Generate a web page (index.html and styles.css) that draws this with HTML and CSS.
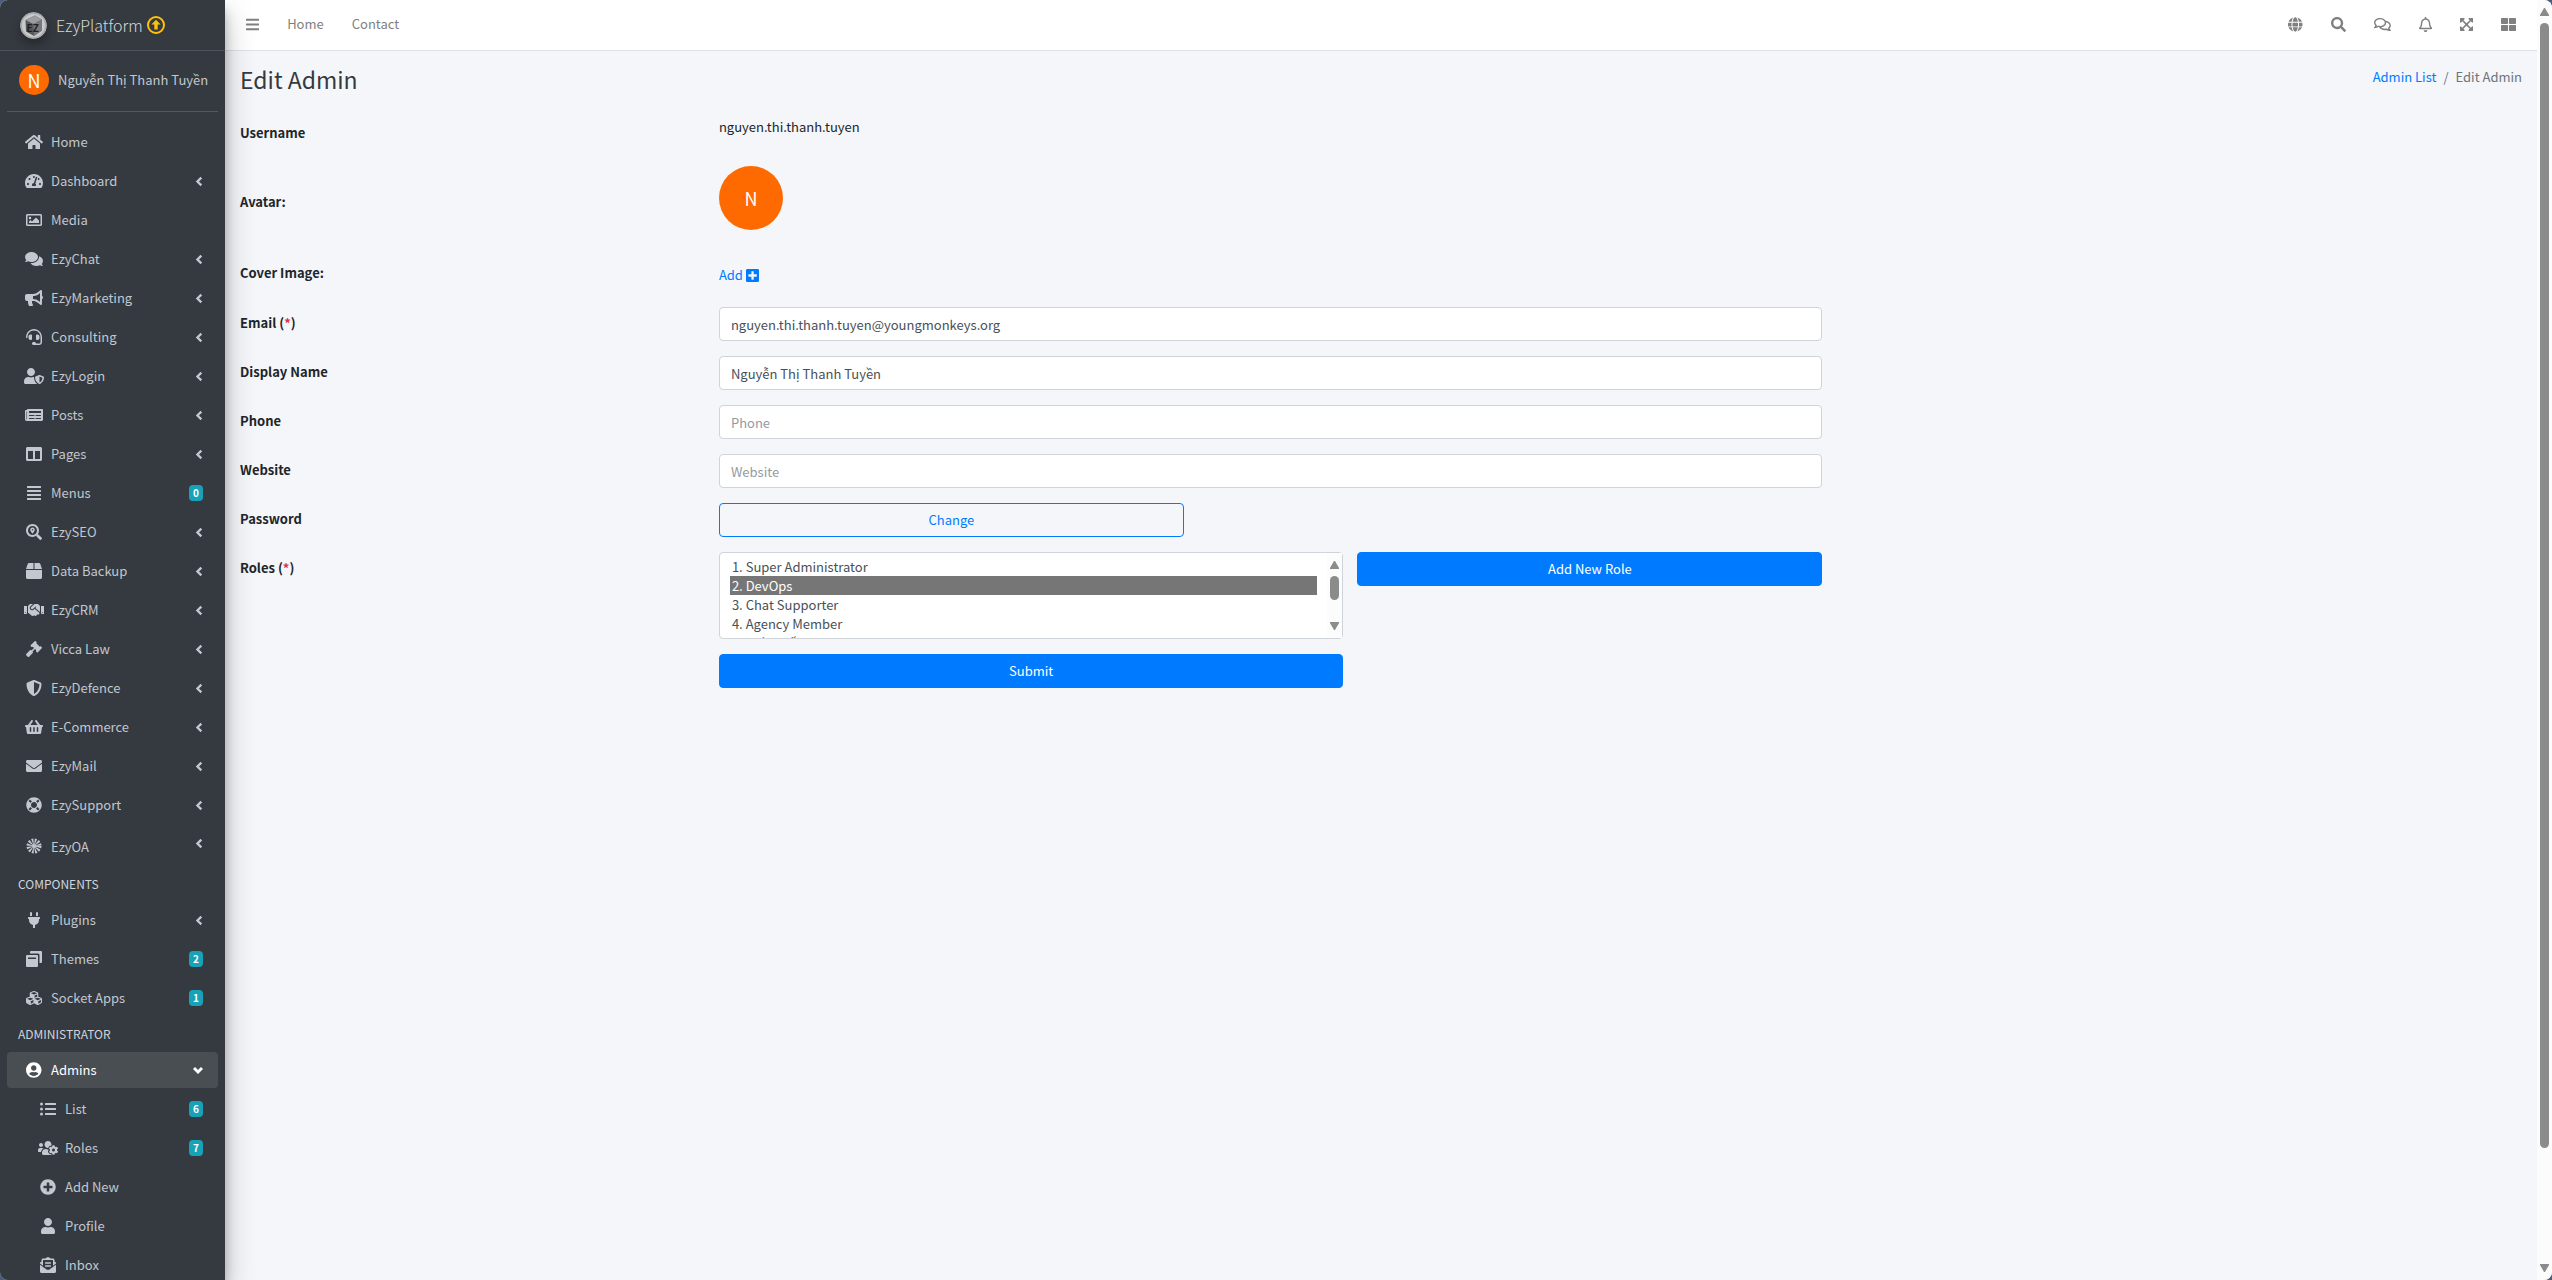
FILE: index.html
```html
<!DOCTYPE html>
<html lang="en">
<head>
    <meta charset="UTF-8">
    <meta name="viewport" content="width=device-width, initial-scale=1.0">
    <title>Edit Admin</title>
    <link rel="stylesheet" href="styles.css">
</head>
<body>

<div class="wrapper">
    <aside class="sidebar">
        <a href="#" class="brand">
            <svg class="brand-logo" viewBox="0 0 54 54">
                <circle cx="27" cy="27" r="27" fill="#a9aaab"/>
                <circle cx="27" cy="27" r="23" fill="#c9cacb"/>
                <path d="M11 16l19-9 14 8v22L28 48 12 39z" fill="#56585a"/>
                <path d="M11 16l19-9 14 8-17 9z" fill="#9b9d9e"/>
                <path d="M27 24l17-9v22L28 48z" fill="#77797b"/>
                <text x="13" y="39" class="logo-text">EZ</text>
            </svg>
            <span class="brand-text">EzyPlatform</span>
            <svg class="brand-update" viewBox="0 0 18 18">
                <circle cx="9" cy="9" r="8" fill="none" stroke="#ffc107" stroke-width="2"/>
                <path d="M9 3.8l4.6 4.8H10.700V13.600H7.300V8.600H4.400z" fill="#ffc107"/>
            </svg>
        </a>

        <div class="user-panel">
            <span class="user-avatar">N</span>
            <a href="#">Nguyễn Thị Thanh Tuyền</a>
        </div>

        <nav class="nav-sidebar">
            <a href="#" class="nav-item">
                <span class="nav-icon"><svg viewBox="0 0 576 512"><path d="M280.37 148.26L96 300.11V464a16 16 0 0 0 16 16l112.06-.29a16 16 0 0 0 15.92-16V368a16 16 0 0 1 16-16h64a16 16 0 0 1 16 16v95.64a16 16 0 0 0 16 16.05L464 480a16 16 0 0 0 16-16V300L295.67 148.26a12.19 12.19 0 0 0-15.3 0zM571.6 251.47L488 182.56V44.05a12 12 0 0 0-12-12h-56a12 12 0 0 0-12 12v72.61L318.47 43a48 48 0 0 0-61 0L4.34 251.47a12 12 0 0 0-1.6 16.9l25.5 31A12 12 0 0 0 45.15 301l235.22-193.74a12.19 12.19 0 0 1 15.3 0L530.9 301a12 12 0 0 0 16.9-1.6l25.5-31a12 12 0 0 0-1.7-16.93z"/></svg></span>
                <span>Home</span>
            </a>
            <a href="#" class="nav-item">
                <span class="nav-icon"><svg viewBox="0 0 576 512"><path d="M288 32C128.940 32 0 160.940 0 320c0 52.800 14.250 102.260 39.060 144.800 5.610 9.620 16.300 15.200 27.440 15.200h443c11.140 0 21.830-5.580 27.440-15.200C561.750 422.260 576 372.800 576 320c0-159.060-128.940-288-288-288zm0 64c14.710 0 26.580 10.130 30.320 23.650-1.110 2.260-2.640 4.230-3.450 6.670l-9.220 27.670c-5.130 3.490-10.970 6.010-17.640 6.010-17.670 0-32-14.330-32-32S270.330 96 288 96zM96 384c-17.670 0-32-14.330-32-32s14.330-32 32-32 32 14.330 32 32-14.330 32-32 32zm48-160c-17.670 0-32-14.330-32-32s14.330-32 32-32 32 14.330 32 32-14.330 32-32 32zm246.770-72.410l-61.330 184C343.130 347.330 352 364.540 352 384c0 11.720-3.380 22.550-8.880 32H232.880c-5.500-9.450-8.880-20.280-8.880-32 0-33.940 26.500-61.430 59.900-63.590l61.340-184.010c4.170-12.560 17.730-19.450 30.360-15.170 12.570 4.190 19.350 17.790 15.170 30.360zm14.660 57.200l15.520-46.550c3.470-1.290 7.130-2.230 11.050-2.230 17.670 0 32 14.330 32 32s-14.330 32-32 32c-11.380-.01-20.890-6.280-26.570-15.220zM480 384c-17.670 0-32-14.330-32-32s14.330-32 32-32 32 14.330 32 32-14.330 32-32 32z"/></svg></span>
                <span>Dashboard</span>
                <svg class="arrow" viewBox="0 0 10 14"><path d="M8 2L3 7l5 5"/></svg>
            </a>
            <a href="#" class="nav-item">
                <span class="nav-icon"><svg viewBox="0 0 512 512"><path d="M464 64H48C21.490 64 0 85.490 0 112v288c0 26.510 21.490 48 48 48h416c26.510 0 48-21.490 48-48V112c0-26.510-21.490-48-48-48zm-6 336H54a6 6 0 0 1-6-6V118a6 6 0 0 1 6-6h404a6 6 0 0 1 6 6v276a6 6 0 0 1-6 6zM128 152c-22.091 0-40 17.909-40 40s17.909 40 40 40 40-17.909 40-40-17.909-40-40-40zM96 352h320v-80l-87.515-87.515c-4.686-4.686-12.284-4.686-16.971 0L192 304l-39.515-39.515c-4.686-4.686-12.284-4.686-16.971 0L96 304v48z"/></svg></span>
                <span>Media</span>
            </a>
            <a href="#" class="nav-item">
                <span class="nav-icon"><svg viewBox="0 0 576 512"><path d="M416 192c0-88.400-93.100-160-208-160S0 103.600 0 192c0 34.300 14.100 65.900 38 92-13.400 30.200-35.500 54.200-35.800 54.500-2.200 2.300-2.800 5.700-1.500 8.700S4.800 352 8 352c36.600 0 66.900-12.300 88.700-25 32.200 15.700 70.300 25 111.300 25 114.900 0 208-71.600 208-160zm122 220c23.900-26 38-57.700 38-92 0-66.900-53.500-124.200-129.300-148.100.9 6.600 1.300 13.300 1.300 20.100 0 105.900-107.700 192-240 192-10.800 0-21.300-.8-31.700-1.900C207.800 439.600 281.800 480 368 480c41 0 79.100-9.200 111.300-25 21.800 12.700 52.100 25 88.700 25 3.200 0 6.100-1.900 7.300-4.800 1.300-2.900.7-6.300-1.500-8.700-.3-.3-22.400-24.200-35.800-54.500z"/></svg></span>
                <span>EzyChat</span>
                <svg class="arrow" viewBox="0 0 10 14"><path d="M8 2L3 7l5 5"/></svg>
            </a>
            <a href="#" class="nav-item">
                <span class="nav-icon"><svg viewBox="0 0 576 512"><path d="M576 240c0-23.630-12.950-44.040-32-55.120V32.010C544 23.260 537.020 0 512 0c-7.120 0-14.190 2.380-19.980 7.020l-85.030 68.030C364.280 109.190 310.660 128 256 128H64c-35.350 0-64 28.650-64 64v96c0 35.350 28.650 64 64 64h33.700c-1.390 10.480-2.180 21.140-2.180 32 0 39.770 9.260 77.350 25.560 110.940 5.190 10.690 16.520 17.060 28.400 17.060h74.280c26.050 0 41.690-29.840 25.900-50.560-16.400-21.520-26.150-48.360-26.150-77.440 0-11.110 1.620-21.790 4.410-32H256c54.660 0 108.280 18.810 150.980 52.950l85.030 68.030a32.023 32.023 0 0 0 19.980 7.020c24.920 0 32-22.780 32-32V295.130C563.050 284.040 576 263.630 576 240zm-96 141.420l-33.050-26.440C392.950 311.780 325.120 288 256 288v-96c69.120 0 136.950-23.780 190.950-66.980L480 98.580v282.840z"/></svg></span>
                <span>EzyMarketing</span>
                <svg class="arrow" viewBox="0 0 10 14"><path d="M8 2L3 7l5 5"/></svg>
            </a>
            <a href="#" class="nav-item">
                <span class="nav-icon"><svg viewBox="0 0 512 512"><path d="M192 208c0-17.670-14.330-32-32-32h-16c-35.350 0-64 28.650-64 64v48c0 35.350 28.650 64 64 64h16c17.670 0 32-14.330 32-32V208zm176 144c35.350 0 64-28.650 64-64v-48c0-35.350-28.650-64-64-64h-16c-17.670 0-32 14.330-32 32v112c0 17.670 14.330 32 32 32h16zM256 0C113.180 0 4.580 118.830 0 256v16c0 8.840 7.160 16 16 16h16c8.840 0 16-7.160 16-16v-16c0-114.690 93.310-208 208-208s208 93.310 208 208h-.12c.08 2.430.12 165.720.12 165.720 0 23.350-18.930 42.280-42.280 42.280H320c0-26.510-21.490-48-48-48h-32c-26.510 0-48 21.490-48 48s21.490 48 48 48h181.720c49.860 0 90.280-40.420 90.280-90.280V256C507.420 118.830 398.820 0 256 0z"/></svg></span>
                <span>Consulting</span>
                <svg class="arrow" viewBox="0 0 10 14"><path d="M8 2L3 7l5 5"/></svg>
            </a>
            <a href="#" class="nav-item">
                <span class="nav-icon"><svg viewBox="0 0 640 512"><path d="M622.300 271.100l-115.200-45c-4.100-1.600-12.600-3.700-22.200 0l-115.200 45c-10.700 4.200-17.700 14-17.700 24.900 0 111.600 68.700 188.800 132.900 213.900 9.600 3.700 18 1.600 22.200 0C558.400 489.900 640 420.500 640 296c0-10.900-7-20.700-17.700-24.900zM496 462.400V273.300l95.500 37.300c-5.600 87.100-60.900 135.400-95.500 151.800zM224 256c70.700 0 128-57.300 128-128S294.700 0 224 0 96 57.300 96 128s57.300 128 128 128zm96 40c0-2.500.8-4.800 1.100-7.200-2.500-.1-4.900-.8-7.500-.8h-16.700c-22.200 10.200-46.900 16-72.900 16s-50.600-5.800-72.900-16h-16.700C60.200 288 0 348.200 0 422.400V464c0 26.500 21.500 48 48 48h352c6.800 0 13.300-1.500 19.200-4-54-42.900-99.200-116.700-99.200-212z"/></svg></span>
                <span>EzyLogin</span>
                <svg class="arrow" viewBox="0 0 10 14"><path d="M8 2L3 7l5 5"/></svg>
            </a>
            <a href="#" class="nav-item">
                <span class="nav-icon"><svg viewBox="0 0 576 512"><path d="M552 64H88c-13.255 0-24 10.745-24 24v8H24c-13.255 0-24 10.745-24 24v272c0 30.928 25.072 56 56 56h472c26.510 0 48-21.490 48-48V88c0-13.255-10.745-24-24-24zM56 400a8 8 0 0 1-8-8V144h16v248a8 8 0 0 1-8 8zm236-16H140c-6.627 0-12-5.373-12-12v-8c0-6.627 5.373-12 12-12h152c6.627 0 12 5.373 12 12v8c0 6.627-5.373 12-12 12zm208 0H348c-6.627 0-12-5.373-12-12v-8c0-6.627 5.373-12 12-12h152c6.627 0 12 5.373 12 12v8c0 6.627-5.373 12-12 12zm-208-96H140c-6.627 0-12-5.373-12-12v-8c0-6.627 5.373-12 12-12h152c6.627 0 12 5.373 12 12v8c0 6.627-5.373 12-12 12zm208 0H348c-6.627 0-12-5.373-12-12v-8c0-6.627 5.373-12 12-12h152c6.627 0 12 5.373 12 12v8c0 6.627-5.373 12-12 12zm0-96H140c-6.627 0-12-5.373-12-12v-40c0-6.627 5.373-12 12-12h360c6.627 0 12 5.373 12 12v40c0 6.627-5.373 12-12 12z"/></svg></span>
                <span>Posts</span>
                <svg class="arrow" viewBox="0 0 10 14"><path d="M8 2L3 7l5 5"/></svg>
            </a>
            <a href="#" class="nav-item">
                <span class="nav-icon"><svg viewBox="0 0 512 512"><path d="M464 32H48C21.490 32 0 53.490 0 80v352c0 26.510 21.490 48 48 48h416c26.510 0 48-21.490 48-48V80c0-26.510-21.490-48-48-48zM224 416H64V160h160v256zm224 0H288V160h160v256z"/></svg></span>
                <span>Pages</span>
                <svg class="arrow" viewBox="0 0 10 14"><path d="M8 2L3 7l5 5"/></svg>
            </a>
            <a href="#" class="nav-item">
                <span class="nav-icon"><svg viewBox="0 0 448 512"><path d="M432 416H16a16 16 0 0 0-16 16v32a16 16 0 0 0 16 16h416a16 16 0 0 0 16-16v-32a16 16 0 0 0-16-16zm0-128H16a16 16 0 0 0-16 16v32a16 16 0 0 0 16 16h416a16 16 0 0 0 16-16v-32a16 16 0 0 0-16-16zm0-128H16a16 16 0 0 0-16 16v32a16 16 0 0 0 16 16h416a16 16 0 0 0 16-16v-32a16 16 0 0 0-16-16zm0-128H16A16 16 0 0 0 0 48v32a16 16 0 0 0 16 16h416a16 16 0 0 0 16-16V48a16 16 0 0 0-16-16z"/></svg></span>
                <span>Menus</span>
                <span class="badge">0</span>
            </a>
            <a href="#" class="nav-item">
                <span class="nav-icon"><svg viewBox="0 0 512 512"><path d="M505.040 442.660l-99.710-99.690c-4.500-4.500-10.600-7-17-7h-16.300c27.600-35.300 44-79.690 44-127.990C416.030 93.090 322.920 0 208.020 0S0 93.090 0 207.980s93.110 207.980 208.020 207.980c48.300 0 92.710-16.400 128.010-44v16.300c0 6.400 2.500 12.500 7 17l99.710 99.690c9.400 9.400 24.600 9.400 33.900 0l28.300-28.300c9.400-9.400 9.400-24.590.1-33.990zm-297.020-90.700c-79.540 0-144-64.340-144-143.980 0-79.530 64.350-143.980 144-143.980 79.540 0 144 64.340 144 143.980 0 79.530-64.350 143.980-144 143.980zm.02-239.960c-40.780 0-73.840 33.050-73.840 73.830 0 32.960 48.260 93.050 66.750 114.860a9.240 9.240 0 0 0 14.180 0c18.490-21.810 66.750-81.890 66.750-114.860 0-40.780-33.060-73.830-73.840-73.830zm0 96c-13.260 0-24-10.750-24-24 0-13.260 10.750-24 24-24s24 10.740 24 24c0 13.250-10.750 24-24 24z"/></svg></span>
                <span>EzySEO</span>
                <svg class="arrow" viewBox="0 0 10 14"><path d="M8 2L3 7l5 5"/></svg>
            </a>
            <a href="#" class="nav-item">
                <span class="nav-icon"><svg viewBox="0 0 512 512"><path d="M509.500 184.600L458.900 32.800C452.400 13.200 434.100 0 413.400 0H272v192h238.700c-.4-2.500-.4-5-1.200-7.400zM240 0H98.600c-20.700 0-39 13.200-45.500 32.800L2.500 184.600c-.8 2.400-.8 4.900-1.200 7.400H240V0zM0 224v240c0 26.500 21.500 48 48 48h416c26.500 0 48-21.500 48-48V224H0z"/></svg></span>
                <span>Data Backup</span>
                <svg class="arrow" viewBox="0 0 10 14"><path d="M8 2L3 7l5 5"/></svg>
            </a>
            <a href="#" class="nav-item">
                <span class="nav-icon"><svg viewBox="0 0 640 512"><path d="M434.700 64h-85.900c-8 0-15.700 3-21.600 8.400l-98.300 90c-.1.1-.2.3-.3.4-16.600 15.600-16.300 40.500-2.100 56 12.700 13.900 39.400 17.600 56.100 2.700.1-.1.3-.1.4-.2l79.900-73.200c6.500-5.900 16.700-5.500 22.600 1 6 6.500 5.500 16.600-1 22.600l-26.100 23.900L504 313.800c2.900 2.400 5.500 5 7.900 7.700V128l-54.600-54.600c-5.900-6-14.100-9.400-22.600-9.400zM544 128.200v223.900c0 17.700 14.300 32 32 32h64V128.200h-96zm48 223.900c-8.800 0-16-7.200-16-16s7.200-16 16-16 16 7.200 16 16-7.200 16-16 16zM0 384h64c17.700 0 32-14.300 32-32V128.200H0V384zm48-63.900c8.800 0 16 7.200 16 16s-7.200 16-16 16-16-7.200-16-16c0-8.900 7.200-16 16-16zm435.900 18.600L334.600 217.500l-30 27.500c-29.700 27.100-75.200 24.500-101.700-4.400-26.900-29.400-24.800-74.900 4.400-101.700L289.100 64h-83.800c-8.500 0-16.600 3.400-22.600 9.400L128 128v223.900h18.300l90.500 81.900c27.400 22.300 67.700 18.100 90-9.300l.2-.2 17.900 15.500c15.900 13 39.400 10.500 52.300-5.400l31.400-38.600 5.400 4.400c13.700 11.100 33.900 9.100 45-4.700l9.500-11.700c11.200-13.800 9.100-33.900-4.600-45.100z"/></svg></span>
                <span>EzyCRM</span>
                <svg class="arrow" viewBox="0 0 10 14"><path d="M8 2L3 7l5 5"/></svg>
            </a>
            <a href="#" class="nav-item">
                <span class="nav-icon"><svg viewBox="0 0 512 512"><path d="M504.971 199.362l-22.627-22.627c-9.373-9.373-24.569-9.373-33.941 0l-5.657 5.657L329.608 69.255l5.657-5.657c9.373-9.373 9.373-24.569 0-33.941L312.638 7.029c-9.373-9.373-24.569-9.373-33.941 0L154.246 131.480c-9.373 9.373-9.373 24.569 0 33.941l22.627 22.627c9.373 9.373 24.569 9.373 33.941 0l5.657-5.657 39.598 39.598-81.040 81.040-5.657-5.657c-12.497-12.497-32.758-12.497-45.255 0L9.373 412.118c-12.497 12.497-12.497 32.758 0 45.255l45.255 45.255c12.497 12.497 32.758 12.497 45.255 0l114.745-114.745c12.497-12.497 12.497-32.758 0-45.255l-5.657-5.657 81.040-81.040 39.598 39.598-5.657 5.657c-9.373 9.373-9.373 24.569 0 33.941l22.627 22.627c9.373 9.373 24.569 9.373 33.941 0l124.451-124.451c9.372-9.372 9.372-24.568 0-33.941z"/></svg></span>
                <span>Vicca Law</span>
                <svg class="arrow" viewBox="0 0 10 14"><path d="M8 2L3 7l5 5"/></svg>
            </a>
            <a href="#" class="nav-item">
                <span class="nav-icon"><svg viewBox="0 0 512 512"><path d="M466.500 83.700l-192-80a48.150 48.150 0 0 0-36.900 0l-192 80C27.700 91.100 16 108.600 16 128c0 198.500 114.500 335.700 221.500 380.300 11.800 4.900 25.100 4.900 36.900 0C360.100 472.600 496 349.300 496 128c0-19.400-11.700-36.900-29.500-44.300zM256.100 446.300l-.1-381 175.900 73.300c-3.300 151.400-82.100 261.100-175.800 307.700z"/></svg></span>
                <span>EzyDefence</span>
                <svg class="arrow" viewBox="0 0 10 14"><path d="M8 2L3 7l5 5"/></svg>
            </a>
            <a href="#" class="nav-item">
                <span class="nav-icon"><svg viewBox="0 0 576 512"><path d="M576 216v16c0 13.255-10.745 24-24 24h-8l-26.113 182.788C514.509 462.435 494.257 480 470.370 480H105.630c-23.887 0-44.139-17.565-47.518-41.212L32 256h-8c-13.255 0-24-10.745-24-24v-16c0-13.255 10.745-24 24-24h67.341l106.780-146.821c10.395-14.292 30.407-17.453 44.701-7.058 14.293 10.395 17.453 30.408 7.058 44.701L170.477 192h235.046L326.120 82.821c-10.395-14.292-7.234-34.306 7.059-44.701 14.291-10.395 34.306-7.235 44.701 7.058L484.659 192H552c13.255 0 24 10.745 24 24zM312 392V280c0-13.255-10.745-24-24-24s-24 10.745-24 24v112c0 13.255 10.745 24 24 24s24-10.745 24-24zm112 0V280c0-13.255-10.745-24-24-24s-24 10.745-24 24v112c0 13.255 10.745 24 24 24s24-10.745 24-24zm-224 0V280c0-13.255-10.745-24-24-24s-24 10.745-24 24v112c0 13.255 10.745 24 24 24s24-10.745 24-24z"/></svg></span>
                <span>E-Commerce</span>
                <svg class="arrow" viewBox="0 0 10 14"><path d="M8 2L3 7l5 5"/></svg>
            </a>
            <a href="#" class="nav-item">
                <span class="nav-icon"><svg viewBox="0 0 512 512"><path d="M502.300 190.800c3.900-3.100 9.700-.2 9.700 4.700V400c0 26.500-21.500 48-48 48H48c-26.500 0-48-21.500-48-48V195.600c0-5 5.700-7.800 9.700-4.700 22.400 17.400 52.100 39.500 154.100 113.600 21.100 15.400 56.700 47.800 92.200 47.600 35.700.3 72-32.800 92.300-47.600 102-74.100 131.600-96.300 154-113.700zM256 320c23.200.4 56.600-29.200 73.400-41.400 132.700-96.300 142.800-104.700 173.400-128.700 5.800-4.500 9.200-11.500 9.200-18.900v-19c0-26.500-21.500-48-48-48H48c-26.500 0-48 21.500-48 48v19c0 7.400 3.400 14.300 9.200 18.900 30.600 23.900 40.700 32.400 173.400 128.700 16.800 12.200 50.200 41.800 73.400 41.400z"/></svg></span>
                <span>EzyMail</span>
                <svg class="arrow" viewBox="0 0 10 14"><path d="M8 2L3 7l5 5"/></svg>
            </a>
            <a href="#" class="nav-item">
                <span class="nav-icon"><svg viewBox="0 0 512 512"><path d="M256 8C119.033 8 8 119.033 8 256s111.033 248 248 248 248-111.033 248-248S392.967 8 256 8zm173.696 119.559l-63.399 63.399c-10.987-18.559-26.670-34.252-45.255-45.255l63.399-63.399a218.396 218.396 0 0 1 45.255 45.255zM256 352c-53.019 0-96-42.981-96-96s42.981-96 96-96 96 42.981 96 96-42.981 96-96 96zM127.559 82.304l63.399 63.399c-18.559 10.987-34.252 26.670-45.255 45.255l-63.399-63.399a218.372 218.372 0 0 1 45.255-45.255zM82.304 384.441l63.399-63.399c10.987 18.559 26.670 34.252 45.255 45.255l-63.399 63.399a218.396 218.396 0 0 1-45.255-45.255zm302.137 45.255l-63.399-63.399c18.559-10.987 34.252-26.670 45.255-45.255l63.399 63.399a218.403 218.403 0 0 1-45.255 45.255z"/></svg></span>
                <span>EzySupport</span>
                <svg class="arrow" viewBox="0 0 10 14"><path d="M8 2L3 7l5 5"/></svg>
            </a>
            <a href="#" class="nav-item nav-item-tall">
                <span class="nav-icon"><svg viewBox="0 0 32 32"><circle cx="16" cy="16" r="9" fill="none" stroke="currentColor" stroke-width="12" stroke-dasharray="2.800 1.910"/><circle cx="16" cy="16" r="4"/></svg></span>
                <span>EzyOA</span>
                <svg class="arrow" viewBox="0 0 10 14"><path d="M8 2L3 7l5 5"/></svg>
            </a>

            <div class="nav-header">COMPONENTS</div>

            <a href="#" class="nav-item">
                <span class="nav-icon"><svg viewBox="0 0 384 512"><path d="M320,32a32,32,0,0,0-64,0v96h64Zm48,128H16A16,16,0,0,0,0,176v32a16,16,0,0,0,16,16H32v32A160.070,160.070,0,0,0,160,412.800V512h64V412.800A160.070,160.070,0,0,0,352,256V224h16a16,16,0,0,0,16-16V176A16,16,0,0,0,368,160ZM128,32a32,32,0,0,0-64,0v96h64Z"/></svg></span>
                <span>Plugins</span>
                <svg class="arrow" viewBox="0 0 10 14"><path d="M8 2L3 7l5 5"/></svg>
            </a>
            <a href="#" class="nav-item">
                <span class="nav-icon"><svg viewBox="0 0 32 32"><path d="M10 0h20a2 2 0 0 1 2 2v20a2 2 0 0 1-2 2h-3V8a3 3 0 0 0-3-3H8V2a2 2 0 0 1 2-2zM2 8h20a2 2 0 0 1 2 2v20a2 2 0 0 1-2 2H2a2 2 0 0 1-2-2V10a2 2 0 0 1 2-2zm2 5v3h16v-3z"/></svg></span>
                <span>Themes</span>
                <span class="badge">2</span>
            </a>
            <a href="#" class="nav-item">
                <span class="nav-icon"><svg viewBox="0 0 512 512"><path d="M488.600 250.200L392 214V105.500c0-15-9.300-28.400-23.400-33.700l-100-37.500c-8.100-3.100-17.100-3.100-25.300 0l-100 37.500c-14.100 5.300-23.400 18.700-23.400 33.700V214l-96.600 36.200C9.300 255.500 0 268.900 0 283.900V394c0 13.600 7.700 26.100 19.900 32.200l100 50c10.100 5.100 22.100 5.100 32.200 0l103.900-52 103.900 52c10.100 5.100 22.100 5.100 32.200 0l100-50c12.200-6.100 19.900-18.600 19.900-32.200V283.900c0-15-9.300-28.400-23.400-33.700zM358 214.800l-85 31.900v-68.200l85-37v73.300zM154 104.100l102-38.200 102 38.200v.6l-102 41.400-102-41.400v-.6zm84 291.100l-85 42.500v-79.100l85-38.800v75.400zm0-112l-102 41.400-102-41.400v-.6l102-38.200 102 38.200v.6zm240 112l-85 42.500v-79.100l85-38.800v75.400zm0-112l-102 41.400-102-41.400v-.6l102-38.200 102 38.200v.6z"/></svg></span>
                <span>Socket Apps</span>
                <span class="badge">1</span>
            </a>

            <div class="nav-header">ADMINISTRATOR</div>

            <a href="#" class="nav-item active">
                <span class="nav-icon"><svg viewBox="0 0 496 512"><path d="M248 8C111 8 0 119 0 256s111 248 248 248 248-111 248-248S385 8 248 8zm0 96c48.600 0 88 39.400 88 88s-39.400 88-88 88-88-39.400-88-88 39.400-88 88-88zm0 344c-58.700 0-111.300-26.600-146.500-68.200 18.800-35.400 55.600-59.800 98.500-59.800 2.400 0 4.800.4 7.100 1.100 13 4.200 26.600 6.900 40.900 6.900 14.300 0 28-2.700 40.900-6.900 2.300-.7 4.700-1.100 7.100-1.100 42.900 0 79.700 24.400 98.500 59.800C359.300 421.400 306.700 448 248 448z"/></svg></span>
                <span>Admins</span>
                <svg class="arrow arrow-down" viewBox="0 0 10 14"><path d="M1 5l4 4 4-4"/></svg>
            </a>
            <a href="#" class="nav-item nav-sub">
                <span class="nav-icon"><svg viewBox="0 0 512 512"><path d="M48 48a48 48 0 1 0 48 48 48 48 0 0 0-48-48zm0 160a48 48 0 1 0 48 48 48 48 0 0 0-48-48zm0 160a48 48 0 1 0 48 48 48 48 0 0 0-48-48zm448 16H176a16 16 0 0 0-16 16v32a16 16 0 0 0 16 16h320a16 16 0 0 0 16-16v-32a16 16 0 0 0-16-16zm0-320H176a16 16 0 0 0-16 16v32a16 16 0 0 0 16 16h320a16 16 0 0 0 16-16V80a16 16 0 0 0-16-16zm0 160H176a16 16 0 0 0-16 16v32a16 16 0 0 0 16 16h320a16 16 0 0 0 16-16v-32a16 16 0 0 0-16-16z"/></svg></span>
                <span>List</span>
                <span class="badge">6</span>
            </a>
            <a href="#" class="nav-item nav-sub">
                <span class="nav-icon"><svg viewBox="0 0 640 512"><path d="M610.500 341.300c2.600-14.100 2.600-28.500 0-42.600l25.800-14.900c3-1.700 4.300-5.200 3.300-8.500-6.700-21.600-18.200-41.200-33.200-57.400-2.300-2.500-6-3.100-9-1.400l-25.800 14.900c-10.900-9.300-23.400-16.500-36.900-21.300v-29.800c0-3.400-2.400-6.400-5.700-7.100-22.300-5-45-4.800-66.200 0-3.300.7-5.700 3.700-5.700 7.100v29.800c-13.500 4.800-26 12-36.900 21.300l-25.800-14.900c-2.900-1.700-6.700-1.100-9 1.400-15 16.200-26.500 35.800-33.200 57.400-1 3.300.4 6.800 3.300 8.500l25.800 14.900c-2.600 14.100-2.600 28.500 0 42.600l-25.800 14.900c-3 1.700-4.300 5.200-3.300 8.500 6.700 21.600 18.200 41.100 33.200 57.400 2.300 2.500 6 3.100 9 1.400l25.800-14.900c10.900 9.300 23.400 16.500 36.900 21.300v29.800c0 3.400 2.400 6.400 5.700 7.100 22.300 5 45 4.800 66.200 0 3.300-.7 5.700-3.700 5.700-7.100v-29.800c13.500-4.800 26-12 36.900-21.300l25.800 14.900c2.900 1.700 6.700 1.100 9-1.400 15-16.200 26.500-35.800 33.200-57.400 1-3.300-.4-6.800-3.300-8.500l-25.800-14.900zM496 368.500c-26.800 0-48.500-21.800-48.500-48.500s21.800-48.500 48.500-48.500 48.500 21.800 48.500 48.500-21.700 48.500-48.500 48.500zM96 224c35.300 0 64-28.700 64-64s-28.700-64-64-64-64 28.700-64 64 28.700 64 64 64zm224 32c1.900 0 3.700-.5 5.600-.6 8.300-21.700 20.500-42.100 36.300-59.200 7.400-8 17.900-12.600 28.900-12.600 6.900 0 13.700 1.800 19.600 5.300l7.900 4.600c.8-.5 1.600-.9 2.400-1.400 7-14.600 11.200-30.800 11.200-48 0-61.900-50.100-112-112-112S208 82.100 208 144c0 61.900 50.100 112 112 112zm105.200 194.500c-2.300-1.200-4.600-2.600-6.800-3.900-8.200 4.800-15.300 9.800-27.500 9.800-10.900 0-21.400-4.600-28.900-12.600-18.300-19.800-32.300-43.900-40.200-69.600-10.700-34.500 24.900-49.700 25.800-50.300-.1-2.600-.1-5.200 0-7.800l-7.900-4.600c-3.800-2.200-7-5-9.800-8.100-3.300.2-6.500.6-9.800.6-24.600 0-47.600-6-68.500-16h-8.300C179.600 288 128 339.600 128 403.200V432c0 26.500 21.500 48 48 48h255.400c-3.700-6-6.200-12.800-6.200-20.300v-9.200zM173.100 274.600C161.500 263.100 145.600 256 128 256H64c-35.300 0-64 28.700-64 64v32c0 17.700 14.300 32 32 32h65.900c6.300-47.400 34.900-87.300 75.200-109.400z"/></svg></span>
                <span>Roles</span>
                <span class="badge">7</span>
            </a>
            <a href="#" class="nav-item nav-sub">
                <span class="nav-icon"><svg viewBox="0 0 512 512"><path d="M256 8C119 8 8 119 8 256s111 248 248 248 248-111 248-248S393 8 256 8zm144 276c0 6.600-5.400 12-12 12h-92v92c0 6.600-5.400 12-12 12h-56c-6.600 0-12-5.400-12-12v-92h-92c-6.600 0-12-5.400-12-12v-56c0-6.600 5.400-12 12-12h92v-92c0-6.600 5.400-12 12-12h56c6.600 0 12 5.400 12 12v92h92c6.600 0 12 5.400 12 12v56z"/></svg></span>
                <span>Add New</span>
            </a>
            <a href="#" class="nav-item nav-sub">
                <span class="nav-icon"><svg viewBox="0 0 448 512"><path d="M224 256c70.700 0 128-57.300 128-128S294.700 0 224 0 96 57.300 96 128s57.300 128 128 128zm89.600 32h-16.700c-22.200 10.200-46.900 16-72.900 16s-50.600-5.800-72.900-16h-16.700C60.200 288 0 348.200 0 422.400V464c0 26.500 21.500 48 48 48h352c26.500 0 48-21.500 48-48v-41.600c0-74.200-60.200-134.400-134.400-134.400z"/></svg></span>
                <span>Profile</span>
            </a>
            <a href="#" class="nav-item nav-sub">
                <span class="nav-icon"><svg viewBox="0 0 512 512"><path d="M176 216h160c8.840 0 16-7.160 16-16v-16c0-8.840-7.160-16-16-16H176c-8.840 0-16 7.160-16 16v16c0 8.840 7.160 16 16 16zm-16 80c0 8.840 7.160 16 16 16h160c8.840 0 16-7.160 16-16v-16c0-8.840-7.160-16-16-16H176c-8.840 0-16 7.160-16 16v16zm96 121.130c-16.420 0-32.840-5.060-46.860-15.190L0 250.860V464c0 26.510 21.490 48 48 48h416c26.510 0 48-21.490 48-48V250.860L302.860 401.940c-14.020 10.120-30.440 15.190-46.860 15.190zm237.610-254.180c-8.850-6.940-17.240-13.470-29.610-22.810V96c0-26.510-21.490-48-48-48h-77.550c-3.040-2.200-5.870-4.260-9.040-6.560C312.600 29.170 279.200-.35 256 0c-23.200-.35-56.590 29.170-73.410 41.440-3.170 2.300-6 4.360-9.040 6.560H96c-26.510 0-48 21.490-48 48v44.140c-12.370 9.330-20.760 15.870-29.610 22.810A47.995 47.995 0 0 0 0 200.720v10.650l96 69.350V96h320v184.720l96-69.350v-10.650c0-14.740-6.780-28.670-18.390-37.770z"/></svg></span>
                <span>Inbox</span>
            </a>
        </nav>
    </aside>

    <div class="main">
        <header class="topbar">
            <button type="button" class="top-button" aria-label="Toggle menu"><svg viewBox="0 0 448 512"><path d="M16 132h416c8.837 0 16-7.163 16-16V76c0-8.837-7.163-16-16-16H16C7.163 60 0 67.163 0 76v40c0 8.837 7.163 16 16 16zm0 160h416c8.837 0 16-7.163 16-16v-40c0-8.837-7.163-16-16-16H16c-8.837 0-16 7.163-16 16v40c0 8.837 7.163 16 16 16zm0 160h416c8.837 0 16-7.163 16-16v-40c0-8.837-7.163-16-16-16H16c-8.837 0-16 7.163-16 16v40c0 8.837 7.163 16 16 16z"/></svg></button>
            <a href="#">Home</a>
            <a href="#">Contact</a>
            <div class="top-icons">
                <button type="button" class="top-button" aria-label="Language"><svg viewBox="0 0 496 512"><path d="M336.500 160C322 70.700 287.800 8 248 8s-74 62.700-88.500 152h177zM152 256c0 22.200 1.200 43.500 3.300 64h185.300c2.100-20.500 3.300-41.800 3.300-64s-1.200-43.500-3.300-64H155.300c-2.100 20.500-3.300 41.800-3.300 64zm324.700-96c-28.600-67.900-86.500-120.400-158-141.600 24.400 33.800 41.200 84.700 50 141.600h108zM177.200 18.400C105.800 39.600 47.800 92.100 19.300 160h108c8.700-56.900 25.500-107.800 49.900-141.600zM487.400 192H372.700c2.100 21 3.300 42.500 3.300 64s-1.200 43-3.300 64h114.600c5.500-20.500 8.600-41.800 8.600-64s-3.100-43.500-8.500-64zM120 256c0-21.500 1.200-43 3.300-64H8.600C3.200 212.500 0 233.800 0 256s3.200 43.500 8.600 64h114.600c-2-21-3.200-42.500-3.200-64zm39.500 96c14.500 89.300 48.700 152 88.500 152s74-62.700 88.500-152h-177zm159.300 141.600c71.400-21.200 129.400-73.700 158-141.600h-108c-8.800 56.900-25.600 107.800-50 141.600zM19.300 352c28.600 67.900 86.500 120.400 158 141.600-24.400-33.800-41.200-84.700-50-141.600h-108z"/></svg></button>
                <button type="button" class="top-button" aria-label="Search"><svg viewBox="0 0 512 512"><path d="M505 442.700L405.300 343c-4.500-4.500-10.600-7-17-7H372c27.600-35.300 44-79.700 44-128C416 93.100 322.900 0 208 0S0 93.100 0 208s93.100 208 208 208c48.300 0 92.700-16.400 128-44v16.300c0 6.400 2.500 12.500 7 17l99.700 99.700c9.400 9.400 24.600 9.400 33.900 0l28.300-28.300c9.400-9.400 9.400-24.600.1-34zM208 336c-70.700 0-128-57.200-128-128 0-70.700 57.200-128 128-128 70.700 0 128 57.200 128 128 0 70.700-57.200 128-128 128z"/></svg></button>
                <button type="button" class="top-button" aria-label="Messages"><svg viewBox="0 0 576 512"><path d="M532 386.200c27.500-27.100 44-61.100 44-98.200 0-80-76.500-146.100-176.200-157.900C368.300 72.500 294.300 32 208 32 93.100 32 0 103.600 0 192c0 37 16.500 71 44 98.200-15.300 30.700-37.300 54.500-37.700 54.900-6.300 6.700-8.100 16.500-4.400 25 3.600 8.500 12 14 21.200 14 53.500 0 96.700-20.200 125.200-38.800 9.200 2.100 18.700 3.700 28.400 4.900C208.100 407.600 281.800 448 368 448c20.800 0 40.800-2.400 59.800-6.800C456.300 459.700 499.400 480 553 480c9.200 0 17.500-5.500 21.200-14 3.600-8.500 1.900-18.300-4.400-25-.4-.3-22.500-24.100-37.800-54.800zm-392.800-92.300L122.100 305c-14.100 9.100-28.500 16.300-43.100 21.400 2.700-4.700 5.400-9.700 8-14.800l15.500-31.100L77.700 256C64.200 242.600 48 220.700 48 192c0-60.700 73.300-112 160-112s160 51.300 160 112-73.300 112-160 112c-16.500 0-33-1.900-49-5.600l-19.800-4.500zM498.300 352l-24.700 24.400 15.500 31.100c2.600 5.100 5.300 10.100 8 14.800-14.600-5.100-29-12.300-43.100-21.400l-17.100-11.100-19.900 4.600c-16 3.700-32.500 5.600-49 5.600-54 0-102.200-20.100-131.300-49.700C338 339.500 416 272.900 416 192c0-3.400-.4-6.700-.7-10C479.700 196.500 528 238.800 528 288c0 28.700-16.200 50.600-29.700 64z"/></svg></button>
                <button type="button" class="top-button" aria-label="Notifications"><svg viewBox="0 0 448 512"><path d="M439.390 362.290c-19.320-20.760-55.470-51.990-55.470-154.290 0-77.700-54.480-139.900-127.940-155.160V32c0-17.670-14.320-32-31.980-32s-31.980 14.330-31.980 32v20.840C118.560 68.100 64.080 130.300 64.080 208c0 102.300-36.150 133.530-55.470 154.290-6 6.450-8.660 14.160-8.610 21.710.11 16.400 12.980 32 32.100 32h383.800c19.120 0 32-15.600 32.100-32 .05-7.550-2.610-15.270-8.610-21.710zM67.530 368c21.220-27.970 44.420-74.330 44.530-159.420 0-.2-.06-.38-.06-.58 0-61.860 50.140-112 112-112s112 50.140 112 112c0 .2-.06.38-.06.58.11 85.100 23.310 131.460 44.530 159.420H67.530zM224 512c35.320 0 63.970-28.650 63.970-64H160.030c0 35.350 28.650 64 63.970 64z"/></svg></button>
                <button type="button" class="top-button" aria-label="Full screen"><svg viewBox="0 0 448 512"><path d="M448 344v112a23.940 23.940 0 0 1-24 24H312c-21.390 0-32.090-25.900-17-41l36.200-36.200L224 295.600 116.770 402.900 153 439c15.090 15.100 4.390 41-17 41H24a23.940 23.940 0 0 1-24-24V344c0-21.400 25.890-32.100 41-17l36.190 36.200L184.460 256 77.180 148.700 41 185c-15.100 15.100-41 4.400-41-17V56a23.940 23.940 0 0 1 24-24h112c21.390 0 32.090 25.900 17 41l-36.200 36.200L224 216.400l107.230-107.300L295 73c-15.090-15.100-4.390-41 17-41h112a23.940 23.940 0 0 1 24 24v112c0 21.400-25.890 32.100-41 17l-36.190-36.200L263.540 256l107.280 107.300L407 327.100c15.100-15.200 41-4.500 41 16.900z"/></svg></button>
                <button type="button" class="top-button" aria-label="Apps"><svg viewBox="0 0 512 512"><path d="M296 32h192c13.255 0 24 10.745 24 24v160c0 13.255-10.745 24-24 24H296c-13.255 0-24-10.745-24-24V56c0-13.255 10.745-24 24-24zm-80 0H24C10.745 32 0 42.745 0 56v160c0 13.255 10.745 24 24 24h192c13.255 0 24-10.745 24-24V56c0-13.255-10.745-24-24-24zM0 296v160c0 13.255 10.745 24 24 24h192c13.255 0 24-10.745 24-24V296c0-13.255-10.745-24-24-24H24c-13.255 0-24 10.745-24 24zm296 184h192c13.255 0 24-10.745 24-24V296c0-13.255-10.745-24-24-24H296c-13.255 0-24 10.745-24 24v160c0 13.255 10.745 24 24 24z"/></svg></button>
            </div>
        </header>

        <main class="content">
            <div class="content-header">
                <h1>Edit Admin</h1>
                <nav class="breadcrumb">
                    <a href="#">Admin List</a>
                    <span>/</span>
                    <span>Edit Admin</span>
                </nav>
            </div>

            <form class="admin-form">
                <div class="form-row">
                    <span class="form-label">Username</span>
                    <span class="col-7 form-text">nguyen.thi.thanh.tuyen</span>
                </div>
                <div class="form-row avatar-row">
                    <span class="form-label">Avatar:</span>
                    <div class="col-7 form-text"><span class="avatar">N</span></div>
                </div>
                <div class="form-row cover-row">
                    <span class="form-label">Cover Image:</span>
                    <button type="button" class="add-cover">Add <svg viewBox="0 0 448 512"><path d="M400 32H48C21.500 32 0 53.500 0 80v352c0 26.500 21.500 48 48 48h352c26.500 0 48-21.500 48-48V80c0-26.500-21.500-48-48-48zm-32 252c0 6.600-5.400 12-12 12h-92v92c0 6.600-5.400 12-12 12h-56c-6.600 0-12-5.400-12-12v-92H92c-6.600 0-12-5.400-12-12v-56c0-6.600 5.400-12 12-12h92v-92c0-6.600 5.400-12 12-12h56c6.600 0 12 5.400 12 12v92h92c6.600 0 12 5.400 12 12v56z"/></svg></button>
                </div>
                <div class="form-row">
                    <label class="form-label" for="email">Email (<span class="required">*</span>)</label>
                    <input class="form-control col-7" type="text" id="email" value="nguyen.thi.thanh.tuyen@youngmonkeys.org">
                </div>
                <div class="form-row">
                    <label class="form-label" for="displayName">Display Name</label>
                    <input class="form-control col-7" type="text" id="displayName" value="Nguyễn Thị Thanh Tuyền">
                </div>
                <div class="form-row">
                    <label class="form-label" for="phone">Phone</label>
                    <input class="form-control col-7" type="text" id="phone" placeholder="Phone">
                </div>
                <div class="form-row">
                    <label class="form-label" for="website">Website</label>
                    <input class="form-control col-7" type="text" id="website" placeholder="Website">
                </div>
                <div class="form-row">
                    <label class="form-label" for="password">Password</label>
                    <button type="button" class="btn btn-outline col-3" id="password">Change</button>
                </div>
                <div class="form-row">
                    <label class="form-label" for="roles">Roles (<span class="required">*</span>)</label>
                    <div class="col-4 select-wrap">
                        <select class="role-select" id="roles" multiple>
                            <option>1. Super Administrator</option>
                            <option selected>2. DevOps</option>
                            <option>3. Chat Supporter</option>
                            <option>4. Agency Member</option>
                            <option>5. Giám đốc</option>
                        </select>
                        <div class="select-scroll">
                            <svg viewBox="0 0 9 8"><path d="M4 0h1l4 7v1H0V7z"/></svg>
                            <span class="select-thumb"></span>
                            <svg class="scroll-down" viewBox="0 0 9 8"><path d="M4 8h1l4-7V0H0v1z"/></svg>
                        </div>
                    </div>
                    <button type="button" class="btn btn-primary col-3">Add New Role</button>
                </div>
                <div class="form-row">
                    <button type="button" class="btn btn-primary submit">Submit</button>
                </div>
            </form>
        </main>
    </div>

    <div class="page-scroll">
        <svg viewBox="0 0 9 8"><path d="M4 0h1l4 7v1H0V7z"/></svg>
        <span class="page-thumb"></span>
        <svg class="scroll-down" viewBox="0 0 9 8"><path d="M4 8h1l4-7V0H0v1z"/></svg>
    </div>
</div>

</body>
</html>
```
FILE: styles.css
```css
* {
    box-sizing: border-box;
}
body {
    margin: 0;
    background: #4a5d7c;
    color: #212529;
    font-family: "Source Sans Pro", "Noto Sans CJK SC", "Noto Sans", sans-serif;
    font-size: 13px;
    line-height: 22px;
}
a {
    color: #007bff;
    text-decoration: none;
}
button, input, select {
    font: inherit;
}
svg {
    display: block;
    fill: currentColor;
}
.wrapper {
    display: flex;
    height: 100vh;
    border-radius: 8px;
    overflow: hidden;
    background: #f4f6f9;
}

/* sidebar */
.sidebar {
    flex: 0 0 225px;
    min-width: 0;
    position: relative;
    z-index: 2;
    background: #343a40;
    box-shadow: 0 14px 28px rgba(0, 0, 0, 0.25), 0 10px 10px rgba(0, 0, 0, 0.22);
}
.sidebar a {
    color: #c2c7d0;
}
.sidebar .brand {
    display: flex;
    align-items: center;
    height: 51px;
    padding: 0 20px;
    border-bottom: 1px solid #4b545c;
    font-size: 16px;
    font-weight: 300;
    color: #d6d8d9;
}
.brand-logo {
    width: 27px;
    height: 27px;
    margin-right: 9px;
    border-radius: 50%;
    box-shadow: 0 5px 10px rgba(0, 0, 0, 0.3);
}
.logo-text {
    font-size: 20px;
    font-weight: 700;
    fill: #1f2123;
}
.brand-update {
    width: 18px;
    height: 18px;
    margin-left: 4px;
}
.user-panel {
    display: flex;
    align-items: center;
    height: 61px;
    margin: 0 7px 12px;
    padding: 0 0 2px 12px;
    gap: 9px;
    border-bottom: 1px solid #4f5962;
    white-space: nowrap;
}
.user-avatar {
    width: 30px;
    height: 30px;
    border-radius: 50%;
    background: #ff6a00;
    color: #fff;
    font-size: 18px;
    line-height: 30px;
    text-align: center;
}
.nav-sidebar {
    display: flex;
    flex-direction: column;
    gap: 3px;
    padding: 0 7px;
}
.nav-item {
    display: flex;
    flex: none;
    align-items: center;
    height: 36px;
    padding: 0 15px;
    border-radius: 4px;
}
.nav-icon {
    display: flex;
    justify-content: center;
    width: 24px;
    margin-right: 5px;
}
.nav-icon svg {
    height: 16px;
}
.nav-item-tall {
    height: 40px;
    align-items: flex-end;
    padding-bottom: 8px;
}
.nav-item-tall .nav-icon {
    margin-bottom: 4px;
}
.nav-item-tall .arrow {
    margin-bottom: 9px;
}
.nav-sub {
    padding-left: 29px;
}
.sidebar .active {
    background: #494e53;
    color: #fff;
}
.arrow {
    width: 8px;
    height: 11px;
    margin-left: auto;
    fill: none;
    stroke: currentColor;
    stroke-width: 3;
}
.arrow-down {
    width: 10px;
    height: 14px;
}
.badge {
    width: 14px;
    height: 16px;
    margin-left: auto;
    border-radius: 4px;
    background: #17a2b8;
    color: #fff;
    font-size: 10px;
    font-weight: 700;
    line-height: 16px;
    text-align: center;
}
.nav-header {
    flex: none;
    height: 30px;
    padding: 0 11px;
    color: #d0d4db;
    font-size: 12px;
    line-height: 30px;
}

/* main */
.main {
    flex: 1;
    min-width: 0;
}
.topbar {
    display: flex;
    align-items: center;
    height: 51px;
    padding: 0 7px 2px;
    border-bottom: 1px solid #dee2e6;
    background: #fff;
}
.topbar a {
    padding: 0 14px;
    color: #808080;
}
.top-button {
    padding: 0 14px;
    border: none;
    background: none;
    color: #808080;
}
.top-button svg {
    height: 15px;
}
.top-icons {
    display: flex;
    margin-left: auto;
}
.content {
    padding: 14px 15px;
}
.content-header {
    display: flex;
    justify-content: space-between;
    height: 52px;
}
h1 {
    margin: 0;
    color: #343a40;
    font-size: 23px;
    font-weight: 400;
    line-height: 28px;
}
.breadcrumb {
    display: flex;
    gap: 7px;
    line-height: 24px;
    color: #6c757d;
}
.admin-form {
    display: flex;
    flex-direction: column;
    gap: 15px;
    width: 83.333%;
}
.form-row {
    display: grid;
    grid-template-columns: repeat(12, 1fr);
    column-gap: 14px;
    align-items: start;
    min-height: 34px;
}
.form-label {
    grid-column: 1 / span 3;
    line-height: 32px;
    font-weight: 700;
}
.form-text {
    line-height: 20px;
}
.required {
    color: #dc3545;
}
.col-7 {
    grid-column: span 7;
}
.col-4 {
    grid-column: span 4;
}
.col-3 {
    grid-column: span 3;
}
.avatar-row {
    height: 72px;
}
.cover-row {
    height: 39px;
}
.avatar-row .form-label, .cover-row .form-label {
    align-self: center;
}
.avatar {
    display: block;
    width: 64px;
    height: 64px;
    border-radius: 50%;
    background: #ff6a00;
    color: #fff;
    font-size: 18px;
    line-height: 64px;
    text-align: center;
}
.add-cover {
    display: flex;
    align-self: end;
    align-items: center;
    gap: 3px;
    height: 34px;
    padding: 0;
    border: none;
    background: none;
    color: #007bff;
}
.add-cover svg {
    height: 15px;
}
.form-control {
    width: 100%;
    height: 34px;
    padding: 0 11px;
    border: 1px solid #ced4da;
    border-radius: 4px;
    background: #fff;
    color: #495057;
}
.form-control::placeholder {
    color: #939ba2;
}
.btn {
    height: 34px;
    padding: 0 11px;
    border: 1px solid #007bff;
    border-radius: 4px;
}
.btn-primary {
    background: #007bff;
    color: #fff;
}
.btn-outline {
    background: transparent;
    color: #007bff;
}
.submit {
    grid-column: 4 / span 4;
}
.select-wrap {
    position: relative;
}
.role-select {
    display: block;
    width: 100%;
    height: 87px;
    padding: 4px 25px 0 10px;
    border: 1px solid #ced4da;
    border-radius: 4px;
    background: #fff;
    color: #495057;
    overflow: hidden;
}
.role-select option {
    height: 19px;
    min-height: 19px;
    padding: 0 2px;
    line-height: 19px;
}
.role-select option:checked {
    background: #767676 linear-gradient(#767676, #767676);
    color: #fff;
}
.select-scroll {
    position: absolute;
    top: 1px;
    right: 1px;
    bottom: 1px;
    display: flex;
    flex-direction: column;
    align-items: center;
    width: 15px;
    padding: 8px 0;
    background: #fcfcfc;
    color: #8b8b8b;
}
.select-scroll svg, .page-scroll svg {
    width: 9px;
    height: 8px;
}
.select-thumb {
    width: 9px;
    height: 24px;
    margin-top: 7px;
    border-radius: 5px;
    background: #8b8b8b;
}
.scroll-down {
    margin-top: auto;
}
.page-scroll {
    display: flex;
    flex: 0 0 15px;
    flex-direction: column;
    align-items: center;
    padding: 8px 0;
    background: #fcfcfc;
    color: #8b8b8b;
}
.page-thumb {
    flex: 0 0 89%;
    width: 9px;
    margin-top: 7px;
    border-radius: 5px;
    background: #8b8b8b;
}
```
